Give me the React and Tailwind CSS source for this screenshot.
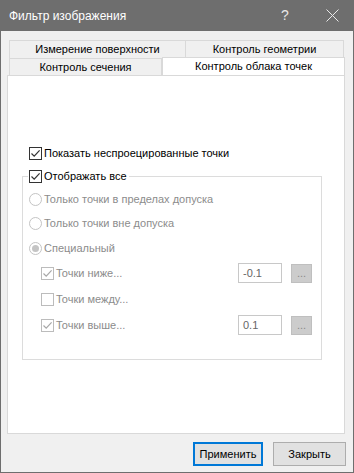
import React from "react";

const Check = ({ checked, disabled }) => (
  <span
    className={
      disabled
        ? "flex h-[13px] w-[13px] shrink-0 items-center justify-center border border-[#bcbcbc] bg-white"
        : "flex h-[13px] w-[13px] shrink-0 items-center justify-center border border-[#333333] bg-white"
    }
  >
    {checked && (
      <svg width="11" height="11" viewBox="0 0 11 11">
        <path
          d="M1.5 5.5 L4.2 8.2 L9.6 2.4"
          fill="none"
          stroke={disabled ? "#a8a8a8" : "#333333"}
          strokeWidth="1.2"
        />
      </svg>
    )}
  </span>
);

const Radio = ({ checked }) => (
  <span className="flex h-[13px] w-[13px] shrink-0 items-center justify-center rounded-full border border-[#c4c4c4] bg-white">
    {checked && <span className="h-[7px] w-[7px] rounded-full bg-[#c4c4c4]" />}
  </span>
);

const Value = ({ value }) => (
  <div className="ml-auto flex items-center gap-[9px] pr-[9px]">
    <div className="flex h-[20px] w-[44px] items-center border border-[#c8c8c8] bg-white px-[4px] text-[#666666]">
      {value}
    </div>
    <div className="flex h-[19px] w-[21px] items-center justify-center border border-[#bfbfbf] bg-[#cccccc] pt-[1px] text-[#8a8a8a]">
      ...
    </div>
  </div>
);

export default function App() {
  return (
    <div className="flex h-[473px] w-[354px] flex-col border border-t-0 border-[#6e6e6e] bg-[#f0f0f0] font-['Liberation_Sans',sans-serif] text-[11px] text-black">
      {/* Title bar */}
      <div className="-mx-px flex h-[31px] shrink-0 items-center bg-[#6e6e6e] text-white">
        <span className="pl-[9px] text-[12px]">Фильтр изображения</span>
        <span className="ml-auto w-[10px] text-center text-[14px] text-[#e8e8e8]">?</span>
        <svg className="ml-[36px] mr-[15px]" width="13" height="13" viewBox="0 0 13 13">
          <path d="M0.5 0.5 L12.5 12.5 M12.5 0.5 L0.5 12.5" stroke="#e8e8e8" strokeWidth="1" />
        </svg>
      </div>

      {/* Tabs */}
      <div className="ml-[6px] mt-[9px] flex w-[338px] flex-col">
        <div className="flex pl-[2px]">
          <div className="flex h-[18px] w-[177px] items-center justify-center border border-b-0 border-[#d9d9d9]">
            Измерение поверхности
          </div>
          <div className="flex h-[18px] w-[158px] items-center justify-center border border-b-0 border-l-0 border-[#d9d9d9]">
            Контроль геометрии
          </div>
        </div>
        <div className="flex items-end">
          <div className="ml-[2px] flex h-[18px] w-[153px] items-center justify-center border border-b-0 border-[#d9d9d9]">
            Контроль сечения
          </div>
          <div className="-mt-[1px] flex h-[19px] w-[183px] items-center justify-center border border-b-0 border-[#d9d9d9] bg-white pb-[2px]">
            Контроль облака точек
          </div>
        </div>

        {/* Panel */}
        <div className="-mt-px flex h-[359px] flex-col border border-[#d9d9d9] bg-white pt-[65px]">
          <div className="flex h-[24px] items-center gap-[2px] pl-[21px]">
            <Check checked />
            <span>Показать неспроецированные точки</span>
          </div>

          <fieldset className="ml-[14px] w-[300px] border border-[#dcdcdc] pb-[21px]">
            <legend className="ml-[5px] flex h-[22px] items-center gap-[2px] bg-white pl-[1px] pr-[2px]">
              <Check checked />
              <span>Отображать все</span>
            </legend>
            <div className="flex h-[24px] items-center gap-[2px] pl-[6px] text-[#8c8c8c]">
              <Radio />
              <span>Только точки в пределах допуска</span>
            </div>
            <div className="flex h-[25px] items-center gap-[2px] pl-[6px] text-[#8c8c8c]">
              <Radio />
              <span>Только точки вне допуска</span>
            </div>
            <div className="flex h-[24px] items-center gap-[2px] pl-[6px] text-[#8c8c8c]">
              <Radio checked />
              <span>Специальный</span>
            </div>
            <div className="flex h-[26px] items-center gap-[2px] pl-[18px] text-[#8c8c8c]">
              <Check checked disabled />
              <span>Точки ниже...</span>
              <Value value="-0.1" />
            </div>
            <div className="flex h-[26px] items-center gap-[2px] pl-[18px] text-[#8c8c8c]">
              <Check disabled />
              <span>Точки между...</span>
            </div>
            <div className="flex h-[26px] items-center gap-[2px] pl-[18px] text-[#8c8c8c]">
              <Check checked disabled />
              <span>Точки выше...</span>
              <Value value="0.1" />
            </div>
          </fieldset>
        </div>
      </div>

      {/* Footer buttons */}
      <div className="flex justify-end gap-[10px] pr-[7px] pt-[8px]">
        <button className="flex h-[24px] w-[70px] items-center justify-center border-2 border-[#0078d7] bg-[#e1e1e1]">
          Применить
        </button>
        <button className="flex h-[24px] w-[73px] items-center justify-center border border-[#adadad] bg-[#e1e1e1]">
          Закрыть
        </button>
      </div>
    </div>
  );
}
